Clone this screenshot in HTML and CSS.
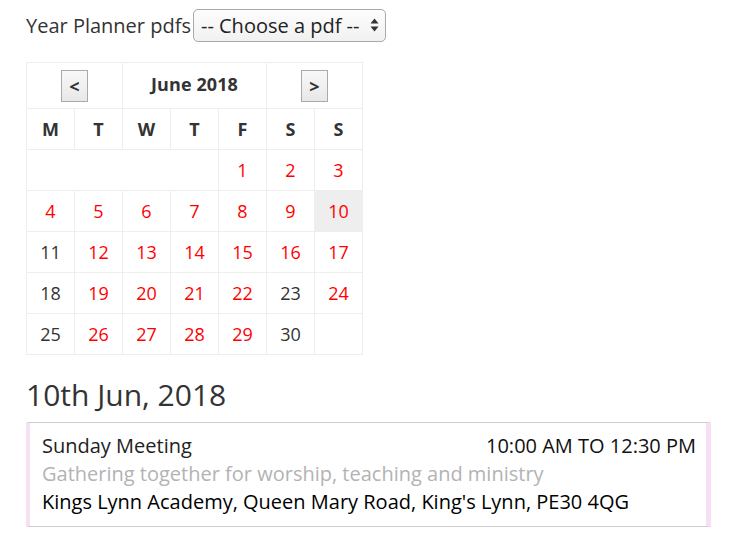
FILE: index.html
```html
<!DOCTYPE html>
<html>
<head>
<meta charset="utf-8">
<link rel="stylesheet" href="styles.css">
</head>
<body>
<div class="page">
  <div class="planner">
    <label class="planner-label">Year Planner pdfs</label><div class="select">
      <span class="select-text">-- Choose a pdf --</span>
      <svg class="select-arrows" width="9" height="14" viewBox="0 0 9 14"><path d="M4.5 0.5 L8.5 5.5 L0.5 5.5 Z M4.5 13.5 L8.5 8.5 L0.5 8.5 Z" fill="#333"/></svg>
    </div>
  </div>

  <table class="cal">
    <tr class="cal-head">
      <td colspan="2"><span class="nav-btn">&lt;</span></td>
      <td colspan="3" class="cal-title">June 2018</td>
      <td colspan="2"><span class="nav-btn">&gt;</span></td>
    </tr>
    <tr class="cal-days">
      <th>M</th><th>T</th><th>W</th><th>T</th><th>F</th><th>S</th><th>S</th>
    </tr>
    <tr>
      <td colspan="4"></td><td class="ev">1</td><td class="ev">2</td><td class="ev">3</td>
    </tr>
    <tr>
      <td class="ev">4</td><td class="ev">5</td><td class="ev">6</td><td class="ev">7</td><td class="ev">8</td><td class="ev">9</td><td class="ev sel">10</td>
    </tr>
    <tr>
      <td>11</td><td class="ev">12</td><td class="ev">13</td><td class="ev">14</td><td class="ev">15</td><td class="ev">16</td><td class="ev">17</td>
    </tr>
    <tr>
      <td>18</td><td class="ev">19</td><td class="ev">20</td><td class="ev">21</td><td class="ev">22</td><td>23</td><td class="ev">24</td>
    </tr>
    <tr>
      <td>25</td><td class="ev">26</td><td class="ev">27</td><td class="ev">28</td><td class="ev">29</td><td>30</td><td></td>
    </tr>
  </table>

  <h2 class="day-title">10th Jun, 2018</h2>

  <div class="event">
    <div class="event-top">
      <span class="event-name">Sunday Meeting</span>
      <span class="event-time">10:00 AM TO 12:30 PM</span>
    </div>
    <div class="event-desc">Gathering together for worship, teaching and ministry</div>
    <div class="event-loc">Kings Lynn Academy, Queen Mary Road, King's Lynn, PE30 4QG</div>
  </div>
</div>
</body>
</html>
```

FILE: styles.css
```css
* { box-sizing: border-box; }
html, body { margin: 0; padding: 0; background: #fff; }
body {
  font-family: "Open Sans", "DejaVu Sans", sans-serif;
  color: #333;
  font-size: 20px;
}
.page {
  padding: 8px 25px 0 26px;
}
.planner {
  display: flex;
  align-items: center;
  height: 34px;
}
.planner-label {
  font-size: 20px;
  color: #333;
}
.select {
  display: flex;
  align-items: center;
  height: 33px;
  margin-left: 2px;
  padding: 0 6px 0 7px;
  border: 1px solid #a9a9a9;
  border-radius: 5px;
  background: linear-gradient(#fdfdfd, #f1f1f1);
  width: 193px;
  justify-content: space-between;
}
.select-text { font-size: 20px; color: #222; }
.select-arrows { display: block; }

.cal {
  margin-top: 20px;
  border-collapse: collapse;
  width: 337px;
  table-layout: fixed;
}
.cal td, .cal th {
  border: 1px solid #eee;
  text-align: center;
  padding: 0;
  height: 41px;
  font-size: 18px;
  color: #333;
}
.cal-head td { height: 46px; }
.cal-title { font-weight: 700; font-size: 21px; letter-spacing: 0.1px; padding-bottom: 3px !important; }
.cal-days th { font-weight: 700; font-size: 18px; }
.cal td.ev { color: #f00; }
.cal td.sel { background: #eee; }
.nav-btn {
  display: inline-flex;
  align-items: center;
  justify-content: center;
  width: 27px;
  height: 32px;
  border: 1px solid #aaa;
  background: linear-gradient(#f8f8f8, #e8e8e8);
  font-weight: 700;
  font-size: 18px;
  color: #333;
  vertical-align: middle;
}

.day-title {
  margin: 20px 0 0;
  font-size: 30px;
  font-weight: 400;
  line-height: 40px;
  color: #333;
}
.event {
  margin-top: 7px;
  border-top: 1px solid #ccc;
  border-bottom: 1px solid #ccc;
  border-left: 4px solid #f8e0f4;
  border-right: 5px solid #f8e0f4;
  padding: 9px 10px 10px 12px;
  line-height: 28px;
  font-size: 20px;
}
.event-top {
  display: flex;
  justify-content: space-between;
  color: #222;
}
.event-time { color: #111; }
.event-desc { color: #b3b3b3; }
.event-loc { color: #000; }
```
